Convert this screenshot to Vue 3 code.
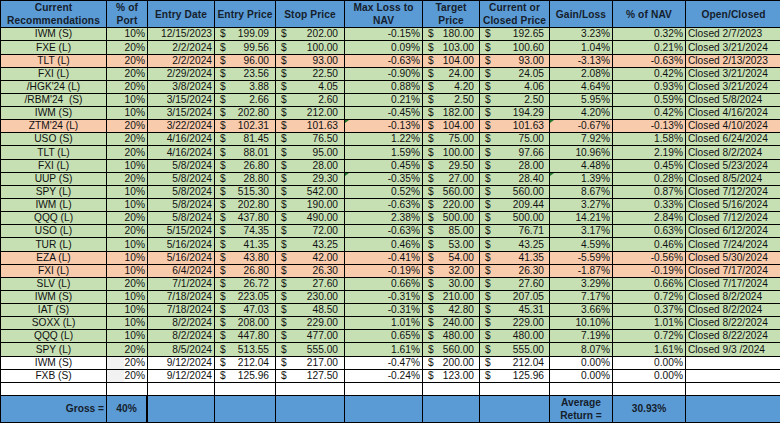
<script setup>
const rows = [
  ['IWM (S)','10%','12/15/2023','199.09','202.00','-0.15%','180.00','192.65','3.23%','0.32%','Closed 2/7/2023','g',13],
  ['FXE (L)','20%','2/2/2024','99.56','100.00','0.09%','103.00','100.60','1.04%','0.21%','Closed 3/21/2024','g',14],
  ['TLT (L)','20%','2/2/2024','96.00','93.00','-0.63%','104.00','93.00','-3.13%','-0.63%','Closed 2/13/2023','o',13],
  ['FXI (L)','20%','2/29/2024','23.56','22.50','-0.90%','24.00','24.05','2.08%','0.42%','Closed 3/21/2024','g',13],
  ['/HGK\'24 (L)','20%','3/8/2024','3.88','4.05','0.88%','4.20','4.06','4.64%','0.93%','Closed 3/21/2024','g',13],
  ['/RBM\'24  (S)','10%','3/15/2024','2.66','2.60','0.21%','2.50','2.50','5.95%','0.59%','Closed 5/8/2024','g',13],
  ['IWM (S)','10%','3/15/2024','202.80','212.00','-0.45%','182.00','194.29','4.20%','0.42%','Closed 4/16/2024','g',13],
  ['ZTM\'24 (L)','20%','3/22/2024','102.31','101.63','-0.13%','104.00','101.63','-0.67%','-0.13%','Closed 4/10/2024','o',13],
  ['USO (S)','20%','4/16/2024','81.45','76.50','1.22%','75.00','75.00','7.92%','1.58%','Closed 6/24/2024','g',13],
  ['TLT (L)','20%','4/16/2024','88.01','95.00','1.59%','100.00','97.66','10.96%','2.19%','Closed 8/2/2024','g',14],
  ['FXI (L)','10%','5/8/2024','26.80','28.00','0.45%','29.50','28.00','4.48%','0.45%','Closed 5/23/2024','g',13],
  ['UUP (S)','20%','5/8/2024','28.80','29.30','-0.35%','27.00','28.40','1.39%','0.28%','Closed 8/5/2024','g',13],
  ['SPY (L)','10%','5/8/2024','515.30','542.00','0.52%','560.00','560.00','8.67%','0.87%','Closed 7/12/2024','g',13],
  ['IWM (L)','10%','5/8/2024','202.80','190.00','-0.63%','220.00','209.44','3.27%','0.33%','Closed 5/16/2024','g',13],
  ['QQQ (L)','20%','5/8/2024','437.80','490.00','2.38%','500.00','500.00','14.21%','2.84%','Closed 7/12/2024','g',13],
  ['USO (L)','20%','5/15/2024','74.35','72.00','-0.63%','85.00','76.71','3.17%','0.63%','Closed 6/12/2024','g',13],
  ['TUR (L)','10%','5/16/2024','41.35','43.25','0.46%','53.00','43.25','4.59%','0.46%','Closed 7/24/2024','g',14],
  ['EZA (L)','10%','5/16/2024','43.80','42.00','-0.41%','54.00','41.35','-5.59%','-0.56%','Closed 5/30/2024','o',13],
  ['FXI (L)','10%','6/4/2024','26.80','26.30','-0.19%','32.00','26.30','-1.87%','-0.19%','Closed 7/17/2024','o',13],
  ['SLV (L)','20%','7/1/2024','26.72','27.60','0.66%','30.00','27.60','3.29%','0.66%','Closed 7/17/2024','g',13],
  ['IWM (S)','10%','7/18/2024','223.05','230.00','-0.31%','210.00','207.05','7.17%','0.72%','Closed 8/2/2024','g',13],
  ['IAT (S)','10%','7/18/2024','47.03','48.50','-0.31%','42.80','45.31','3.66%','0.37%','Closed 8/2/2024','g',13],
  ['SOXX (L)','10%','8/2/2024','208.00','229.00','1.01%','240.00','229.00','10.10%','1.01%','Closed 8/22/2024','g',13],
  ['QQQ (L)','10%','8/2/2024','447.80','477.00','0.65%','480.00','480.00','7.19%','0.72%','Closed 8/22/2024','g',13],
  ['SPY (L)','20%','8/5/2024','513.55','555.00','1.61%','560.00','555.00','8.07%','1.61%','Closed 9/3 /2024','g',14],
  ['IWM (S)','20%','9/12/2024','212.04','217.00','-0.47%','200.00','212.04','0.00%','0.00%','','w',13],
  ['FXB (S)','20%','9/12/2024','125.96','127.50','-0.24%','123.00','125.96','0.00%','0.00%','','w',13],
]
const flagged = [7, 11]
</script>

<template>
  <table class="sheet">
    <colgroup>
      <col class="c0" /><col class="c1" /><col class="c2" /><col class="c3" /><col class="c4" /><col class="c5" />
      <col class="c6" /><col class="c7" /><col class="c8" /><col class="c9" /><col class="c10" />
    </colgroup>
    <thead>
      <tr class="head">
        <th>Current<br />Recommendations</th>
        <th>% of<br />Port</th>
        <th>Entry Date</th>
        <th>Entry Price</th>
        <th>Stop Price</th>
        <th>Max Loss to<br />NAV</th>
        <th>Target<br />Price</th>
        <th>Current or<br />Closed Price</th>
        <th>Gain/Loss</th>
        <th>% of NAV</th>
        <th>Open/Closed</th>
      </tr>
    </thead>
    <tbody>
      <tr v-for="(r, i) in rows" :key="i" :class="r[11]" :style="{ height: r[12] + 'px' }">
        <td class="ctr">{{ r[0] }}</td>
        <td class="num" :class="{ shade: r[11] === 'w' }">{{ r[1] }}</td>
        <td class="num">{{ r[2] }}</td>
        <td class="money entry"><div class="acct"><span>$</span><span>{{ r[3] }}</span></div></td>
        <td class="money entry"><div class="acct"><span>$</span><span>{{ r[4] }}</span></div></td>
        <td class="num flaggable"><i v-if="flagged.includes(i)" class="flag"></i>{{ r[5] }}</td>
        <td class="money"><div class="acct"><span>$</span><span>{{ r[6] }}</span></div></td>
        <td class="money"><div class="acct"><span>$</span><span>{{ r[7] }}</span></div></td>
        <td class="num flaggable"><i v-if="flagged.includes(i)" class="flag"></i>{{ r[8] }}</td>
        <td class="num">{{ r[9] }}</td>
        <td class="status">{{ r[10] }}</td>
      </tr>
      <tr class="w blank">
        <td v-for="n in 11" :key="n"></td>
      </tr>
    </tbody>
    <tfoot>
      <tr class="foot">
        <td class="gross">Gross =</td>
        <td class="gross-val">40%</td>
        <td></td><td></td><td></td><td></td><td></td><td></td>
        <td class="avg">Average<br />Return =</td>
        <td class="avg-val">30.93%</td>
        <td></td>
      </tr>
    </tfoot>
  </table>
</template>

<style>
html, body { margin: 0; background: #fff; }
</style>

<style scoped>
.sheet {
  table-layout: fixed;
  width: 780px;
  border-collapse: separate;
  border-spacing: 0;
  border-top: 1px solid #000;
  border-left: 1px solid #000;
  font-family: "Liberation Sans", Arial, sans-serif;
  font-size: 10.2px;
  color: #111;
}
.c0 { width: 106px; } .c1 { width: 41px; } .c2 { width: 67px; } .c3 { width: 61px; }
.c4 { width: 69px; } .c5 { width: 78px; } .c6 { width: 57px; } .c7 { width: 70px; }
.c8 { width: 63px; } .c9 { width: 73px; } .c10 { width: 95px; }
th, td {
  box-sizing: border-box;
  padding: 0;
  border-right: 1px solid #000;
  border-bottom: 1px solid #000;
  overflow: hidden;
  white-space: pre;
  line-height: 12px;
}
th:last-child, td:last-child { border-right: 0; }
.head { height: 26px; background: #5b9bd5; }
th {
  font-size: 10.2px;
  font-weight: bold;
  line-height: 13px;
  letter-spacing: 0.12px;
  color: #14202c;
  text-align: center;
}
.g { background: #c6e0b4; }
.o { background: #f8cbad; }
.w { background: #fff; }
.blank { height: 13px; }
.ctr { text-align: center; }
.num { text-align: right; padding-right: 2px; }
.money { padding: 0 5px; }
.entry { padding-right: 6px; }
.acct { display: flex; justify-content: space-between; }
.status { padding-left: 2px; }
.shade { background: linear-gradient(90deg, #f2f2f2 0 17px, #fff 17px); }
.flaggable { position: relative; }
.flag {
  position: absolute;
  left: 0;
  top: 0;
  width: 0;
  height: 0;
  border-top: 3px solid #1f7a2a;
  border-right: 4px solid transparent;
}
.foot { height: 27px; background: #5b9bd5; font-weight: bold; color: #14202c; }
.gross { text-align: right; padding-right: 2px; }
.gross-val { text-align: center; border-right-width: 2px; }
.avg { text-align: center; line-height: 13px; }
.avg-val { text-align: center; }
</style>
